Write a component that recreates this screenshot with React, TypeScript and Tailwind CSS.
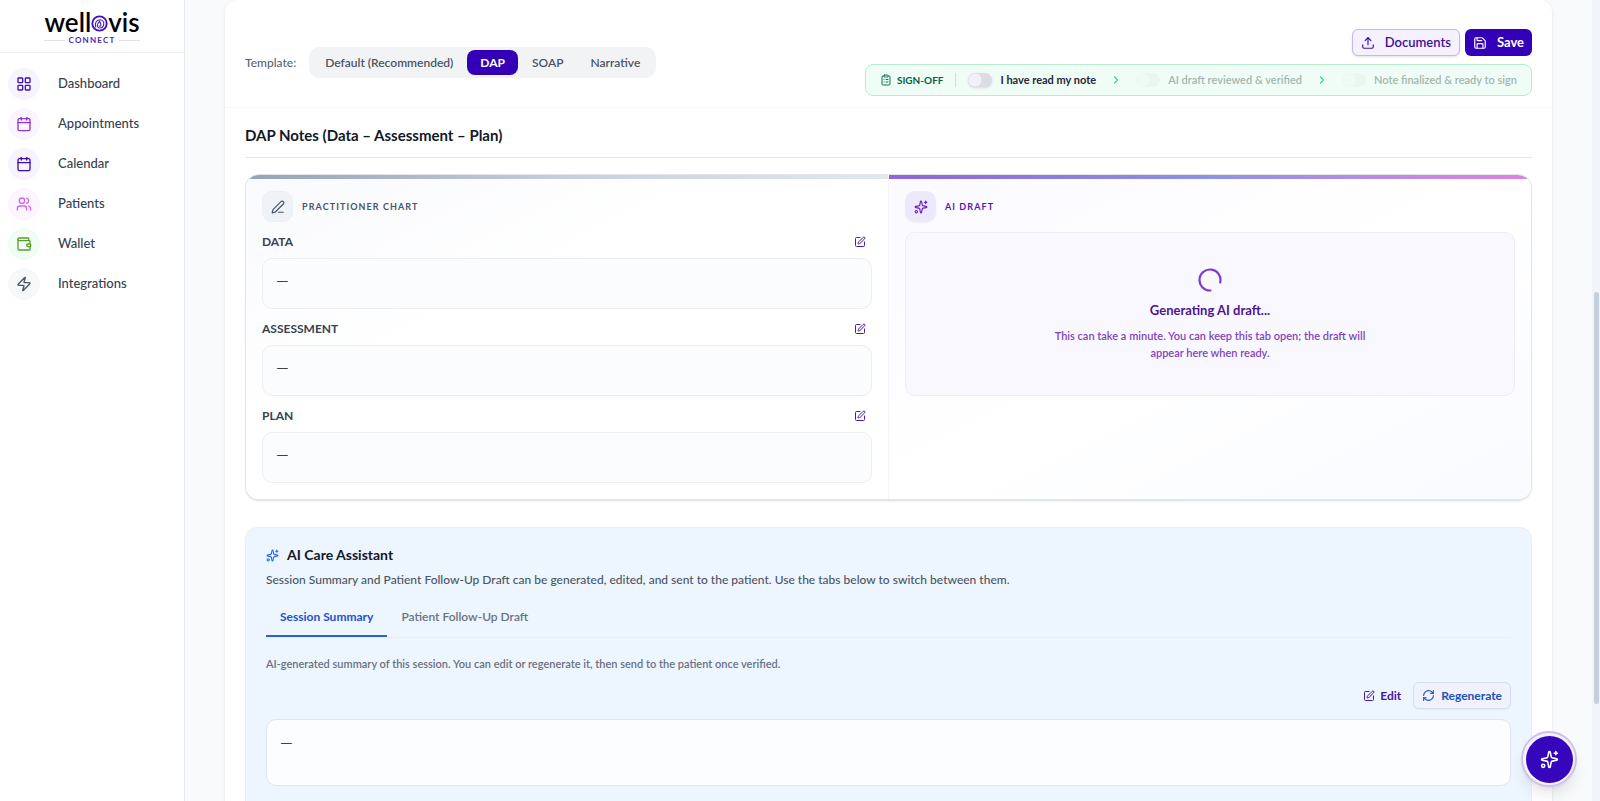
import React, { useState } from "react";
import {
  Calendar,
  ChevronRight,
  ClipboardList,
  LayoutGrid,
  PenLine,
  RefreshCw,
  Save,
  Sparkles,
  SquarePen,
  Upload,
  Users,
  Wallet,
  Zap,
} from "lucide-react";

const navItems = [
  { label: "Dashboard", icon: LayoutGrid, tone: "bg-[#f7f4fe] text-[#3f0fb0]" },
  { label: "Appointments", icon: Calendar, tone: "bg-[#faf5fe] text-[#9333cf]" },
  { label: "Calendar", icon: Calendar, tone: "bg-[#f7f4fe] text-[#3f0fb0]" },
  { label: "Patients", icon: Users, tone: "bg-[#fdf5fe] text-[#d268e0]" },
  { label: "Wallet", icon: Wallet, tone: "bg-[#f2fcf4] text-[#5a9e2f]" },
  { label: "Integrations", icon: Zap, tone: "bg-[#f7f8f9] text-[#4b5563]" },
];

const templates = ["Default (Recommended)", "DAP", "SOAP", "Narrative"];
const sections = ["DATA", "ASSESSMENT", "PLAN"];
const signOffSteps = [
  "I have read my note",
  "AI draft reviewed & verified",
  "Note finalized & ready to sign",
];

function Logo() {
  return (
    <a href="#" aria-label="Wellovis Connect" className="flex flex-col items-center">
      <span className="flex items-baseline text-[26px] leading-[28px] font-semibold text-black">
        well
        <svg viewBox="0 0 18 18" className="mb-[4px] h-[17px] w-[17px] self-end" fill="none" stroke="#4312c4">
          <circle cx="9" cy="9" r="7.6" strokeWidth="2" />
          <path d="M5.2 13.2C3.6 9.4 5.4 5 9.3 5c3.2 0 4.7 2.6 4.2 5-.5 2.6-2.6 4-4.6 3.7-2-.3-2.7-2.200-1.900-4 .5-1.200 1.400-1.800 2-3 .9 1.700 1.900 3 1.400 4.400-.4 1-1.700 1-1.900 0" strokeWidth="1.1" />
        </svg>
        vis
      </span>
      <span className="flex w-full items-center gap-1 text-[8px] leading-[8px] font-bold tracking-[0.15em] text-[#4a1fc0]">
        <span className="h-px flex-1 bg-[#e3dcf5]" />
        CONNECT
        <span className="h-px flex-1 bg-[#e3dcf5]" />
      </span>
    </a>
  );
}

function Sidebar() {
  return (
    <aside className="flex w-[185px] shrink-0 flex-col border-r border-[#e5e7eb] bg-white">
      <div className="flex h-[53px] shrink-0 items-center justify-center border-b border-[#eceef1]">
        <Logo />
      </div>
      <nav className="flex flex-col px-2 pt-[11px]">
        {navItems.map(({ label, icon: Icon, tone }) => (
          <a key={label} href="#" className="flex h-10 items-center gap-[18px] text-[13px] font-medium text-[#374151]">
            <span className={`flex h-8 w-8 items-center justify-center rounded-full ${tone}`}>
              <Icon size={16} strokeWidth={2} />
            </span>
            {label}
          </a>
        ))}
      </nav>
    </aside>
  );
}

function SignOff() {
  const [read, setRead] = useState(false);
  return (
    <div className="flex h-8 items-center rounded-lg border border-[#b5ecd0] bg-[#f0fdf6] px-[14px] text-[11px]">
      <ClipboardList size={12} className="text-[#047857]" />
      <span className="ml-[5px] text-[10px] font-bold text-[#065f46]">SIGN-OFF</span>
      <span className="mx-3 h-[14px] w-px bg-[#b9ecd3]" />
      {signOffSteps.map((step, i) => (
        <React.Fragment key={step}>
          {i > 0 && <ChevronRight size={12} strokeWidth={2.5} className="mx-[14px] text-[#34d399]" />}
          <label className={i === 0 ? "flex items-center gap-2 font-bold text-[#1f2937]" : "flex items-center gap-2 font-semibold text-[#a3b5b0]"}>
            <input
              type="checkbox"
              role="switch"
              disabled={i > 0}
              checked={i === 0 && read}
              onChange={() => setRead(!read)}
              className={
                i === 0
                  ? "h-[14px] w-6 appearance-none rounded-full bg-[#dcdce4] bg-[radial-gradient(circle_at_7px_7px,#f3f0fb_6px,transparent_7px)] shadow-sm"
                  : "h-[14px] w-6 appearance-none rounded-full bg-[#ebf6f1] bg-[radial-gradient(circle_at_7px_7px,#eff9f5_6px,transparent_7px)]"
              }
            />
            {step}
          </label>
        </React.Fragment>
      ))}
    </div>
  );
}

function Toolbar() {
  const [active, setActive] = useState("DAP");
  return (
    <header className="flex items-center justify-between border-b border-[#f6f7f9] px-5 pt-[29px] pb-[11px]">
      <div className="flex items-center gap-[13px] text-xs">
        <span className="font-medium text-[#5b6472]">Template:</span>
        <div className="flex gap-px rounded-[10px] bg-[#f2f3f5] p-[3px]">
          {templates.map((t) => (
            <button
              key={t}
              onClick={() => setActive(t)}
              className={
                t === active
                  ? "h-[25px] rounded-lg bg-[#3300b8] px-[13px] font-bold text-white"
                  : "h-[25px] rounded-lg px-[13px] font-semibold text-[#4b5563]"
              }
            >
              {t}
            </button>
          ))}
        </div>
      </div>
      <div className="flex flex-col items-end gap-2">
        <div className="flex gap-[5px]">
          <button className="flex h-[27px] items-center gap-[10px] rounded-md border border-[#c6b9ea] bg-[#f5f1fe] px-2 text-[13px] font-semibold text-[#3b0f9e] shadow-sm">
            <Upload size={14} />
            Documents
          </button>
          <button className="flex h-[27px] items-center gap-[10px] rounded-md bg-[#3300b8] px-2 text-[13px] font-bold text-white">
            <Save size={14} />
            Save
          </button>
        </div>
        <SignOff />
      </div>
    </header>
  );
}

function PractitionerChart() {
  return (
    <section className="flex flex-1 flex-col border-r border-[#f4f5f8] bg-linear-to-br from-[#f9fafd] via-white via-40% to-white">
      <div className="h-1 shrink-0 bg-linear-to-r from-[#94a3b8] via-[#c5d0dd] to-[#e2e8f0]" />
      <div className="flex flex-col px-4 pt-3">
        <div className="flex items-center gap-[9px]">
          <span className="flex h-[31px] w-[31px] items-center justify-center rounded-[10px] border border-[#eceff4] bg-[#eff2f6] text-[#475569]">
            <PenLine size={14} />
          </span>
          <h3 className="text-[9px] font-bold tracking-[0.12em] text-[#475569]">PRACTITIONER CHART</h3>
        </div>
        {sections.map((name) => (
          <div key={name} className="flex flex-col">
            <div className="flex h-9 items-center justify-between pt-1 pr-[6px]">
              <h4 className="text-xs font-bold text-[#374151]">{name}</h4>
              <button aria-label={`Edit ${name}`} className="text-[#4c1bb0]">
                <SquarePen size={12} />
              </button>
            </div>
            <div className="h-[51px] rounded-[10px] border border-[#eceef1] bg-[#fbfcfd] px-[13px] pt-[11px] text-base leading-5 text-[#374151]">
              —
            </div>
          </div>
        ))}
      </div>
    </section>
  );
}

function AiDraft() {
  return (
    <section className="flex flex-1 flex-col bg-linear-to-br from-[#fbfaff] via-white to-[#f9fbff]">
      <div className="h-1 shrink-0 bg-linear-to-r from-[#8f63dc] via-[#8b93e6] to-[#e07fe6]" />
      <div className="flex flex-col gap-[10px] px-4 pt-3">
        <div className="flex items-center gap-[9px]">
          <span className="flex h-[31px] w-[31px] items-center justify-center rounded-[10px] bg-[#ede9fc] text-[#6d1fc9] shadow-xs">
            <Sparkles size={14} />
          </span>
          <h3 className="text-[9px] font-bold tracking-[0.12em] text-[#5b14b3]">AI DRAFT</h3>
        </div>
        <div className="flex h-[164px] flex-col items-center rounded-[10px] border border-[#efecf8] bg-[#f9f8fe] pt-[35px] text-center">
          <svg viewBox="0 0 24 24" className="h-6 w-6" fill="none" stroke="#7e3bcd" strokeWidth="2.2" strokeLinecap="round">
            <path d="M12.5 22.500A10.500 10.500 0 1 1 22.200 14.500" />
          </svg>
          <p className="mt-2 text-[13px] leading-5 font-bold text-[#4c1490]">Generating AI draft...</p>
          <p className="mt-[7px] w-[330px] text-[11px] leading-[17px] font-semibold text-[#8144bd]">
            This can take a minute. You can keep this tab open; the draft will appear here when ready.
          </p>
        </div>
      </div>
    </section>
  );
}

function CareAssistant() {
  const [tab, setTab] = useState("Session Summary");
  return (
    <section className="mt-[26px] flex h-[300px] shrink-0 flex-col rounded-xl border border-[#e6f0fb] bg-[#edf5fe] px-5 pt-[17px]">
      <h2 className="flex h-5 items-center gap-2 text-sm font-bold text-[#111827]">
        <Sparkles size={13} className="text-[#2563eb]" />
        AI Care Assistant
      </h2>
      <p className="mt-[5px] text-xs leading-5 font-medium text-[#4b5563]">
        Session Summary and Patient Follow-Up Draft can be generated, edited, and sent to the patient. Use the tabs below
        to switch between them.
      </p>
      <div role="tablist" className="mt-2 flex border-b border-[#e7eef8] text-xs">
        {["Session Summary", "Patient Follow-Up Draft"].map((t) => (
          <button
            key={t}
            role="tab"
            aria-selected={t === tab}
            onClick={() => setTab(t)}
            className={
              t === tab
                ? "h-[39px] border-b-2 border-[#2f5fd8] px-[14px] font-bold text-[#2450cf]"
                : "h-[39px] border-b-2 border-transparent px-[14px] font-semibold text-[#6b7280]"
            }
          >
            {t}
          </button>
        ))}
      </div>
      <p className="mt-4 text-[11px] leading-5 font-semibold text-[#6b7280]">
        AI-generated summary of this session. You can edit or regenerate it, then send to the patient once verified.
      </p>
      <div className="mt-2 flex items-center justify-end gap-3 text-xs font-bold">
        <button className="flex items-center gap-[5px] text-[#4a14a8]">
          <SquarePen size={12} />
          Edit
        </button>
        <button className="flex h-[27px] items-center gap-[6px] rounded-md border border-[#d5def3] bg-[#eff1fd] px-2 text-[#2450b8] shadow-xs">
          <RefreshCw size={13} />
          Regenerate
        </button>
      </div>
      <div className="mt-[10px] h-[67px] rounded-[10px] border border-[#e0e6ef] bg-[#fcfdfe] px-[13px] pt-3 text-base leading-5 text-[#374151]">
        —
      </div>
    </section>
  );
}

export default function App() {
  return (
    <div className="flex h-screen overflow-hidden bg-[#f8fafc] font-['Lato','Liberation_Sans',sans-serif]">
      <Sidebar />
      <main className="min-w-0 flex-1 overflow-hidden px-10">
        <div className="flex min-h-full flex-col rounded-t-xl bg-white shadow-sm">
          <Toolbar />
          <div className="flex flex-col px-5 pt-4">
            <h1 className="border-b border-[#e5e7eb] pb-[11px] text-[15px] leading-[22px] font-bold text-[#111827]">
              DAP Notes (Data – Assessment – Plan)
            </h1>
            <div className="mt-4 flex h-[327px] overflow-hidden rounded-[14px] border border-b-2 border-[#e2e5ea] shadow-xs">
              <PractitionerChart />
              <AiDraft />
            </div>
            <CareAssistant />
          </div>
        </div>
      </main>
      <div className="flex w-2 shrink-0 flex-col items-center bg-[#f1f4f8]" aria-hidden="true">
        <div className="mt-[292px] h-[412px] w-[5px] rounded-full bg-[#c6cfdd]" />
      </div>
      <button
        aria-label="Open AI assistant"
        className="fixed right-[23px] bottom-[14px] flex h-14 w-14 items-center justify-center rounded-full border-2 border-[#cfc0ea] bg-[#f6f1fd] shadow-lg"
      >
        <span className="flex h-[47px] w-[47px] shrink-0 items-center justify-center rounded-full bg-[#3506bb] text-white">
          <Sparkles size={19} />
        </span>
      </button>
    </div>
  );
}
